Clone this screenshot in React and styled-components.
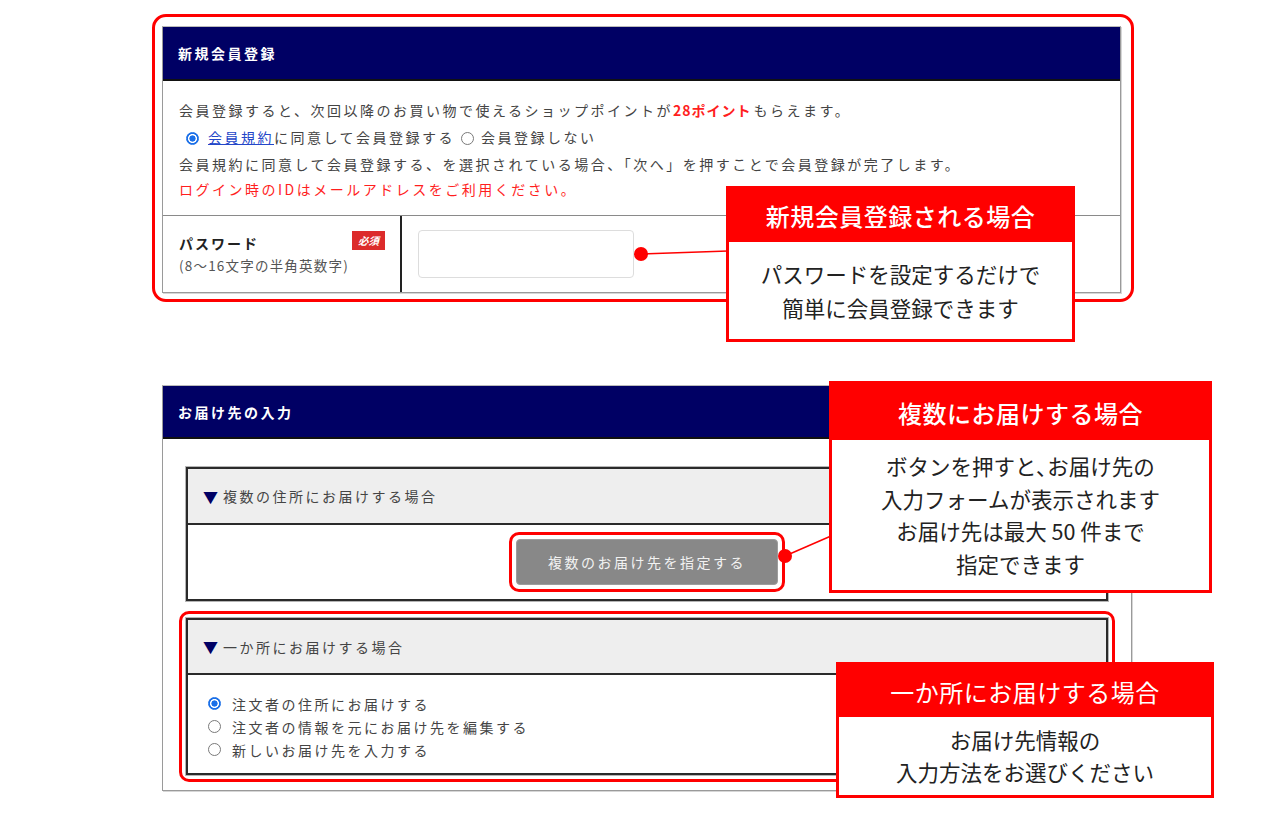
import React from "react";
import styled, { createGlobalStyle } from "styled-components";

const GlobalStyle = createGlobalStyle`
  html, body { margin: 0; padding: 0; background: #fff; }
  body { font-family: "Noto Sans CJK JP", "Noto Sans", sans-serif; }
  * { box-sizing: border-box; }
`;

const Page = styled.div`
  position: relative;
  width: 1280px;
  height: 839px;
  overflow: hidden;
  padding: 14px 0 0 152px;
  display: flex;
  flex-direction: column;
  align-items: flex-start;
`;

/* red marker outline drawn around a part of the form */
const Highlight = styled.div`
  border: 3px solid #f00;
  border-radius: ${p => p.radius || 12}px;
  padding: ${p => p.pad || "4px"};
  width: ${p => (p.w ? `${p.w}px` : "auto")};
  margin: ${p => p.m || "0"};
`;

const Panel = styled.section`
  width: ${p => (p.w ? `${p.w}px` : "100%")};
  margin: ${p => p.m || "0"};
  border: 1px solid #9a9a9a;
  border-top: 1px solid #bbb;
  background: #fff;
  box-shadow: 1px 1px 0 #d6d6d6;
`;

const PanelHead = styled.h2`
  margin: 0;
  height: ${p => p.h}px;
  background: #000064;
  border-bottom: 2px solid #111;
  color: #fff;
  font-size: 14px;
  font-weight: 700;
  letter-spacing: 2.5px;
  display: flex;
  align-items: center;
  padding-left: 15px;
`;

const Intro = styled.div`
  padding: 16px 16px 14px;
  font-size: 14px;
  letter-spacing: 2.5px;
  color: #444;
`;

const Line = styled.p`
  margin: 0;
  line-height: ${p => p.lh || 26}px;
  height: ${p => p.lh || 26}px;
  color: ${p => (p.red ? "#ff1e1e" : "#444")};
  display: flex;
  align-items: center;
  white-space: nowrap;
`;

const Points = styled.b`
  color: #ff1e1e;
  font-weight: 700;
  letter-spacing: 1px;
  margin-right: 2px;
`;

const TermsLink = styled.a`
  color: #2346c8;
  text-decoration: underline;
`;

const Radio = styled.span`
  display: inline-block;
  flex: none;
  width: 13px;
  height: 13px;
  border-radius: 50%;
  margin: ${p => p.m || "0 9px 0 0"};
  border: 1px solid ${p => (p.checked ? "#1a6fe8" : "#7a7a7a")};
  background: ${p =>
    p.checked
      ? "radial-gradient(circle, #1a6fe8 0 2.8px, #fff 3.4px 4.2px, #1a6fe8 4.8px)"
      : "#fff"};
`;

const FieldRow = styled.div`
  display: grid;
  grid-template-columns: 239px 1fr;
  height: 77px;
  border-top: 1px solid #8a8a8a;
`;

const FieldLabel = styled.div`
  border-right: 2px solid #222;
  padding: 0 15px 0 16px;
  display: flex;
  flex-direction: column;
  justify-content: center;
  gap: 2px;
`;

const LabelTop = styled.div`
  display: flex;
  justify-content: space-between;
  align-items: center;
`;

const LabelName = styled.span`
  font-size: 14px;
  font-weight: 700;
  letter-spacing: 2px;
  color: #222;
`;

const LabelNote = styled.span`
  font-size: 13.5px;
  letter-spacing: 1.2px;
  color: #555;
`;

const Required = styled.span`
  background: #dc2b2b;
  color: #fff;
  font-size: 10.5px;
  font-weight: 700;
  font-style: italic;
  width: 33px;
  height: 19px;
  display: flex;
  align-items: center;
  justify-content: center;
  margin-top: -6px;
`;

const FieldInput = styled.div`
  display: flex;
  align-items: center;
  padding-left: 16px;
`;

const TextBox = styled.input`
  width: 216px;
  height: 48px;
  border: 1px solid #ddd;
  border-radius: 4px;
  background: #fff;
`;

const DeliveryBody = styled.div`
  padding: 28px 23px 8px;
  display: flex;
  flex-direction: column;
  gap: 10px;
`;

const Box = styled.div`
  border: 2px solid #2a2a2a;
  box-shadow: 0 0 0 1px #b5b5b5;
  background: #fff;
`;

const BoxHead = styled.div`
  height: ${p => p.h}px;
  background: #eee;
  border-bottom: 2px solid #2a2a2a;
  display: flex;
  align-items: center;
  padding-left: 15px;
  font-size: 14px;
  letter-spacing: 2.5px;
  color: #444;
`;

const Arrow = styled.span`
  color: #000064;
  font-size: 15px;
  letter-spacing: 0;
  margin-right: 5px;
`;

const ButtonArea = styled.div`
  display: flex;
  justify-content: center;
  padding: 7px 0 7px;
`;

const GreyButton = styled.button`
  width: 262px;
  height: 46px;
  background: #888;
  border: 1px solid #9d9d9d;
  border-radius: 4px;
  color: #f2f2f2;
  font-family: inherit;
  font-size: 14px;
  letter-spacing: 2.5px;
`;

const Options = styled.div`
  padding: 17px 20px 12px;
  font-size: 14px;
  letter-spacing: 2.5px;
  color: #444;
`;

const Option = styled.label`
  display: flex;
  align-items: center;
  height: 23px;
  white-space: nowrap;
`;

/* annotation boxes */
const Callout = styled.div`
  position: absolute;
  left: ${p => p.x}px;
  top: ${p => p.y}px;
  width: ${p => p.w}px;
  border: 3px solid #f00;
  background: #fff;
  z-index: 2;
`;

const CalloutHead = styled.div`
  height: ${p => p.h}px;
  background: #f00;
  color: #fff;
  font-size: 24px;
  font-weight: ${p => p.weight || 500};
  display: flex;
  align-items: center;
  justify-content: center;
  letter-spacing: 0.5px;
`;

const CalloutBody = styled.div`
  height: ${p => p.h}px;
  display: flex;
  flex-direction: column;
  align-items: center;
  justify-content: center;
  font-size: 21.5px;
  line-height: ${p => p.lh}px;
  color: #222;
  text-align: center;
`;

const Connectors = styled.svg`
  position: absolute;
  left: 0;
  top: 0;
  pointer-events: none;
  z-index: 1;
`;

export default function App() {
  return (
    <>
      <GlobalStyle />
      <Page>
        <Highlight w={982} pad="9px 10px 6px 7px" radius={14}>
          <Panel>
            <PanelHead h={54}>新規会員登録</PanelHead>
            <Intro>
              <Line>
                会員登録すると、次回以降のお買い物で使えるショップポイントが<Points>28ポイント</Points>もらえます。
              </Line>
              <Line lh={28}>
                <Radio checked m="2px 9px 0 7px" />
                <TermsLink>会員規約</TermsLink>に同意して会員登録する
                <Radio m="2px 7px 0 6px" />
                会員登録しない
              </Line>
              <Line>会員規約に同意して会員登録する、を選択されている場合、「次へ」を押すことで会員登録が完了します。</Line>
              <Line red lh={24}>ログイン時のIDはメールアドレスをご利用ください。</Line>
            </Intro>
            <FieldRow>
              <FieldLabel>
                <LabelTop>
                  <LabelName>パスワード</LabelName>
                  <Required>必須</Required>
                </LabelTop>
                <LabelNote>(8～16文字の半角英数字)</LabelNote>
              </FieldLabel>
              <FieldInput>
                <TextBox type="password" />
              </FieldInput>
            </FieldRow>
          </Panel>
        </Highlight>

        <Panel w={970} m="83px 0 0 10px">
          <PanelHead h={53}>お届け先の入力</PanelHead>
          <DeliveryBody>
            <Box>
              <BoxHead h={56}>
                <Arrow>▼</Arrow>複数の住所にお届けする場合
              </BoxHead>
              <ButtonArea>
                <Highlight pad="4px" radius={10}>
                  <GreyButton>複数のお届け先を指定する</GreyButton>
                </Highlight>
              </ButtonArea>
            </Box>
            <Highlight pad="4px" radius={10} m="0 -7px">
              <Box>
                <BoxHead h={55}>
                  <Arrow>▼</Arrow>一か所にお届けする場合
                </BoxHead>
                <Options>
                  <Option>
                    <Radio checked m="0 11px 0 0" />注文者の住所にお届けする
                  </Option>
                  <Option>
                    <Radio m="0 11px 0 0" />注文者の情報を元にお届け先を編集する
                  </Option>
                  <Option>
                    <Radio m="0 11px 0 0" />新しいお届け先を入力する
                  </Option>
                </Options>
              </Box>
            </Highlight>
          </DeliveryBody>
        </Panel>

        <Connectors width="1280" height="839">
          <line x1="641" y1="254" x2="728" y2="251" stroke="#f00" strokeWidth="1.5" />
          <circle cx="641" cy="254" r="7" fill="#f00" />
          <line x1="785" y1="556" x2="831" y2="536" stroke="#f00" strokeWidth="1.5" />
          <circle cx="785" cy="556" r="7" fill="#f00" />
        </Connectors>

        <Callout x={726} y={186} w={349}>
          <CalloutHead h={53}>新規会員登録される場合</CalloutHead>
          <CalloutBody h={97} lh={34}>
            <span>パスワードを設定するだけで</span>
            <span>簡単に会員登録できます</span>
          </CalloutBody>
        </Callout>

        <Callout x={829} y={381} w={383}>
          <CalloutHead h={56}>複数にお届けする場合</CalloutHead>
          <CalloutBody h={150} lh={32.5}>
            <span>ボタンを押すと､お届け先の</span>
            <span>入力フォームが表示されます</span>
            <span>お届け先は最大 50 件まで</span>
            <span>指定できます</span>
          </CalloutBody>
        </Callout>

        <Callout x={836} y={662} w={378}>
          <CalloutHead h={52} weight={400}>一か所にお届けする場合</CalloutHead>
          <CalloutBody h={78} lh={32}>
            <span>お届け先情報の</span>
            <span>入力方法をお選びください</span>
          </CalloutBody>
        </Callout>
      </Page>
    </>
  );
}
